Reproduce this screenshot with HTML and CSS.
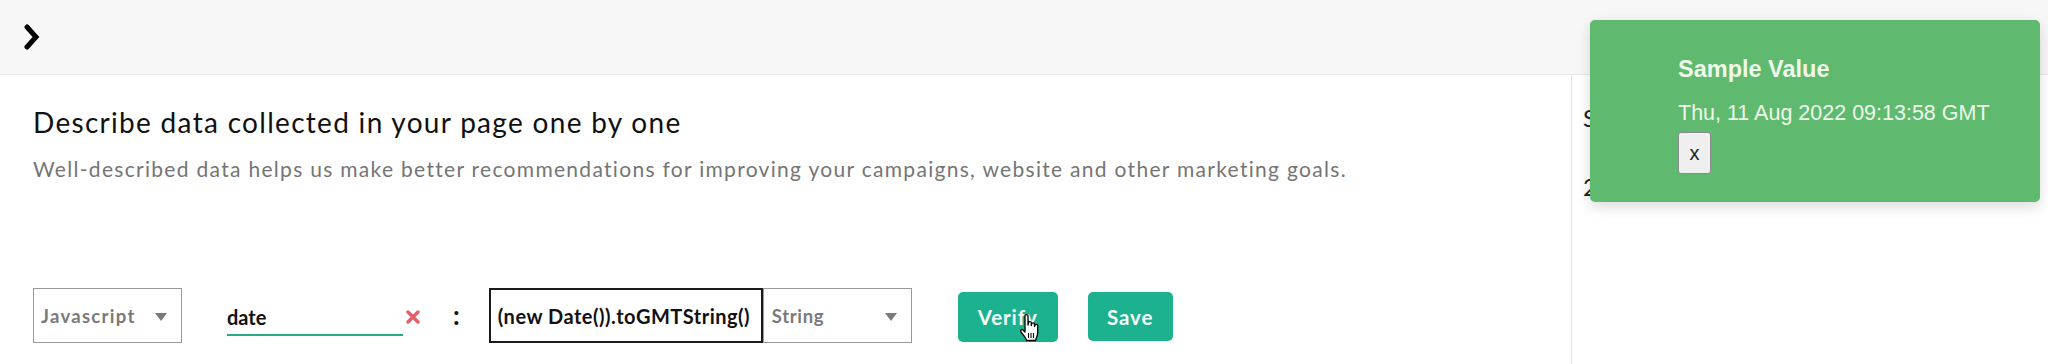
FILE: index.html
```html
<!DOCTYPE html>
<html>
<head>
<meta charset="utf-8">
<link rel="stylesheet" href="styles.css">
</head>
<body>
<div class="topbar">
  <svg class="chev" width="20" height="28" viewBox="0 0 20 28"><path d="M5 3 L14 13 L5 23" fill="none" stroke="#000" stroke-width="5" stroke-linecap="round" stroke-linejoin="miter"/></svg>
</div>
<div class="main">
  <div class="content">
    <h1 class="title">Describe data collected in your page one by one</h1>
    <p class="subtitle">Well-described data helps us make better recommendations for improving your campaigns, website and other marketing goals.</p>
    <div class="row">
      <div class="select lang"><span>Javascript</span><span class="caret"></span></div>
      <div class="namefield"><span class="name">date</span></div>
      <svg class="clear" width="16" height="14" viewBox="0 0 16 14"><path d="M3 2 L13 12 M13 2 L3 12" stroke="#e4606d" stroke-width="3.4" stroke-linecap="round"/></svg>
      <span class="colon">:</span>
      <div class="valuebox">(new Date()).toGMTString()</div>
      <div class="select type"><span>String</span><span class="caret"></span></div>
      <button class="btn verify">Verify</button>
      <button class="btn save">Save</button>
    </div>
  </div>
  <div class="side">
    <div class="side-title">Summary</div>
    <div class="side-num">2</div>
  </div>
</div>
<div class="toast">
  <div class="toast-title">Sample Value</div>
  <div class="toast-value">Thu, 11 Aug 2022 09:13:58 GMT</div>
  <button class="toast-close">x</button>
</div>
<svg class="cursor" width="26" height="30" viewBox="0 0 26 30">
  <path d="M7 2.5 C7 1.2 10 1.2 10 2.5 L10 12 L10.5 9.5 C10.5 8.2 13.3 8.2 13.3 9.5 L13.3 12.5 L13.7 10.8 C13.7 9.6 16.5 9.6 16.5 10.8 L16.5 13.5 L17 12.2 C17 11 19.7 11 19.7 12.2 L19.7 19.5 C19.7 23 18 25 17.5 27.5 L8.5 27.5 C8 25 5.5 22.5 3 19 C2 17.5 3.5 15.8 5 17 L7 19 Z" fill="#fff" stroke="#000" stroke-width="1.3" stroke-linejoin="round"/>
  <path d="M10.5 20 L10.5 25 M13 20 L13 25 M15.5 20 L15.5 25" stroke="#000" stroke-width="1.1"/>
</svg>
</body>
</html>
```
FILE: styles.css
```css
html, body {
  margin: 0;
  padding: 0;
  background: #fff;
  width: 2048px;
  height: 364px;
  overflow: hidden;
  font-family: Lato, "Liberation Sans", sans-serif;
}
.topbar {
  height: 74px;
  background: #f7f7f7;
  border-bottom: 1px solid #e9e9e9;
  display: flex;
  align-items: center;
  padding-left: 22px;
}
.chev {
  display: block;
  margin-top: 2px;
}
.main {
  display: flex;
  height: 289px;
}
.content {
  width: 1538px;
  padding-left: 33px;
  border-right: 1px solid #e6e6e6;
}
.title {
  margin: 30px 0 0;
  font-size: 28px;
  font-weight: 400;
  line-height: 34px;
  letter-spacing: 1.3px;
  color: #111;
}
.subtitle {
  margin: 17px 0 0;
  font-size: 21px;
  line-height: 25px;
  letter-spacing: 1.3px;
  color: #757575;
}
.row {
  margin-top: 107px;
  display: flex;
  align-items: center;
  height: 55px;
}
.select {
  box-sizing: border-box;
  height: 55px;
  border: 1.5px solid #9a9a9a;
  display: flex;
  align-items: center;
  justify-content: space-between;
  padding: 0 14px 0 7px;
  font-size: 18.5px;
  font-weight: 700;
  color: #7a7a7a;
  background: #fff;
}
.lang {
  width: 149px;
  letter-spacing: 1.3px;
}
.caret {
  width: 0;
  height: 0;
  border-left: 6.5px solid transparent;
  border-right: 6.5px solid transparent;
  border-top: 8px solid #7a7a7a;
  margin-top: 3px;
}
.namefield {
  width: 176px;
  height: 55px;
  margin-left: 45px;
  box-sizing: border-box;
  border-bottom: 2.5px solid #2aa98a;
  display: flex;
  align-items: flex-end;
  padding-bottom: 5px;
  margin-top: -14px;
}
.name {
  font-size: 20px;
  font-weight: 700;
  color: #111;
}
.clear {
  margin-left: 2px;
  margin-top: 2px;
}
.colon {
  margin-left: 32px;
  font-size: 26px;
  font-weight: 700;
  color: #111;
  margin-top: -2px;
}
.valuebox {
  box-sizing: border-box;
  margin-left: 29px;
  width: 274px;
  height: 55px;
  border: 2px solid #1a1a1a;
  padding-left: 7px;
  display: flex;
  align-items: center;
  font-size: 20px;
  font-weight: 700;
  letter-spacing: 0.5px;
  color: #111;
  white-space: nowrap;
  overflow: hidden;
}
.type {
  width: 149px;
  border-left-width: 1px;
  padding-left: 8px;
  letter-spacing: 0.7px;
}
.btn {
  box-sizing: border-box;
  height: 50px;
  border: none;
  border-radius: 5px;
  background: #1db28f;
  color: #f4fffb;
  font-family: Lato, "Liberation Sans", sans-serif;
  font-size: 20.5px;
  font-weight: 700;
  letter-spacing: 0.9px;
  padding: 0;
  margin-top: 2px;
}
.verify {
  width: 100px;
  margin-left: 46px;
}
.save {
  width: 85px;
  margin-left: 30px;
  height: 49px;
}
.side {
  padding-left: 11px;
  flex: 1;
}
.side-title {
  margin-top: 28px;
  font-size: 24px;
  color: #222;
}
.side-num {
  margin-top: 40px;
  font-size: 24px;
  color: #222;
}
.toast {
  position: absolute;
  top: 20px;
  left: 1590px;
  width: 450px;
  height: 182px;
  box-sizing: border-box;
  background: #5fba6f;
  border-radius: 5px;
  box-shadow: 0 5px 14px rgba(0, 0, 0, 0.14);
  padding: 36px 0 0 88px;
  font-family: "Liberation Sans", Arial, sans-serif;
  color: #eef9ea;
}
.toast-title {
  font-size: 23.5px;
  font-weight: 700;
  line-height: 27px;
}
.toast-value {
  margin-top: 18px;
  font-size: 21.5px;
  line-height: 25px;
}
.toast-close {
  display: block;
  margin-top: 6px;
  width: 33px;
  height: 42px;
  box-sizing: border-box;
  background: #efefef;
  border: 1px solid #8a8a8a;
  border-radius: 3px;
  font-family: "Liberation Sans", Arial, sans-serif;
  font-size: 20px;
  color: #222;
  padding: 0;
}
.cursor {
  position: absolute;
  left: 1018px;
  top: 313px;
}
```
